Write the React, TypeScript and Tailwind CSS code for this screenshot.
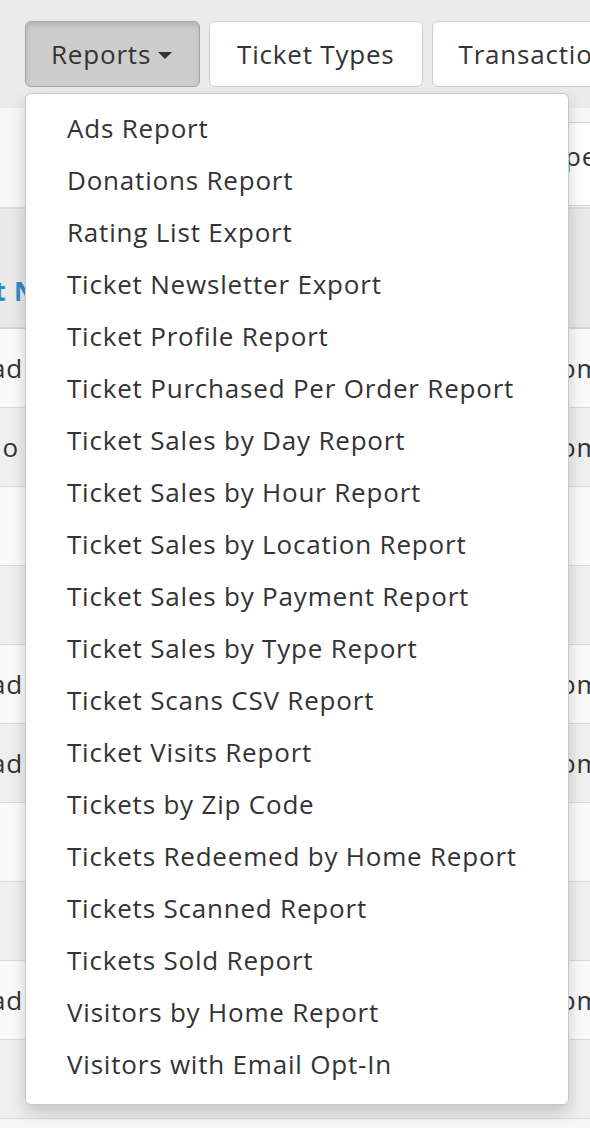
import { useState } from 'react';

const reportItems = [
  'Ads Report',
  'Donations Report',
  'Rating List Export',
  'Ticket Newsletter Export',
  'Ticket Profile Report',
  'Ticket Purchased Per Order Report',
  'Ticket Sales by Day Report',
  'Ticket Sales by Hour Report',
  'Ticket Sales by Location Report',
  'Ticket Sales by Payment Report',
  'Ticket Sales by Type Report',
  'Ticket Scans CSV Report',
  'Ticket Visits Report',
  'Tickets by Zip Code',
  'Tickets Redeemed by Home Report',
  'Tickets Scanned Report',
  'Tickets Sold Report',
  'Visitors by Home Report',
  'Visitors with Email Opt-In',
];

// background table rows, mostly hidden behind the open menu
const rows = [
  { left: 'Download', right: 'Tom' },
  { left: 'No', right: 'Tom' },
  { left: '', right: '' },
  { left: '', right: '' },
  { left: 'Download', right: 'Tom' },
  { left: 'Download', right: 'Tom' },
  { left: '', right: '' },
  { left: '', right: '' },
  { left: 'Download', right: 'Tom' },
  { left: '', right: '' },
];

export default function App() {
  const [open] = useState(true);

  return (
    <div className="relative h-[1128px] w-[590px] overflow-hidden bg-[#f7f7f7] font-['Open_Sans',sans-serif] tracking-[0.8px] text-[#333]">
      {/* tab buttons */}
      <div className="flex h-[108px] gap-[9px] bg-[#ebebeb] pl-[25px] pt-[21px]">
        <button className="flex h-[66px] shrink-0 items-center gap-[7px] rounded-[6px] border border-[#a3a3a3] bg-[#cdcdcd] pl-[25px] pr-[27px] text-[26px] shadow-[inset_0_3px_5px_rgba(0,0,0,0.12)]">
          Reports
          <span className="mt-[2px] h-0 w-0 border-x-[7px] border-t-[7px] border-x-transparent border-t-[#333]" />
        </button>
        <button className="flex h-[66px] shrink-0 items-center rounded-[6px] border border-[#cfcfcf] bg-white px-[27px] text-[26px]">
          Ticket Types
        </button>
        <button className="flex h-[66px] shrink-0 items-center rounded-[6px] border border-[#cfcfcf] bg-white px-[26px] text-[26px]">
          Transactions
        </button>
      </div>

      {/* filter row */}
      <div className="flex h-[99px] items-start">
        <div className="flex-1" />
        <div className="mt-[14px] flex h-[84px] w-[60px] items-center overflow-hidden whitespace-nowrap border-y border-[#d6d6d6] bg-white pb-[16px] pl-[6px] text-[26px]">
          Type
        </div>
      </div>

      {/* table */}
      <div className="border-t-2 border-[#dcdcdc]">
        <div className="flex h-[120px] items-end border-b-2 border-[#d4d4d4] bg-[#e9e9e9] pb-[16px]">
          <div className="flex w-[36px] shrink-0 justify-end overflow-hidden whitespace-nowrap text-[26px] font-bold text-[#2a8cc4]">
            Event N
          </div>
        </div>
        {rows.map((r, i) => (
          <div
            key={i}
            className={`flex h-[79px] items-center border-b border-[#d9d9d9] text-[26px] ${
              i % 2 === 1 ? 'bg-[#efefef]' : 'bg-[#fafafa]'
            }`}
          >
            <div
              className={`flex shrink-0 justify-end overflow-hidden whitespace-nowrap ${
                r.left === 'No' ? 'w-[19px]' : 'w-[23px]'
              }`}
            >
              {r.left}
            </div>
            <div className="flex-1" />
            <div className="w-[45px] shrink-0 overflow-hidden whitespace-nowrap">{r.right}</div>
          </div>
        ))}
      </div>

      {/* open dropdown menu */}
      {open && (
        <ul className="absolute left-[25px] top-[93px] w-[544px] rounded-[6px] border border-[#c8c8c8] bg-white pb-[14px] pt-[8px] shadow-[0_8px_16px_rgba(0,0,0,0.18)]">
          {reportItems.map((item) => (
            <li key={item} className="h-[52px] whitespace-nowrap pl-[41px] text-[26px] leading-[52px]">
              {item}
            </li>
          ))}
        </ul>
      )}
    </div>
  );
}
